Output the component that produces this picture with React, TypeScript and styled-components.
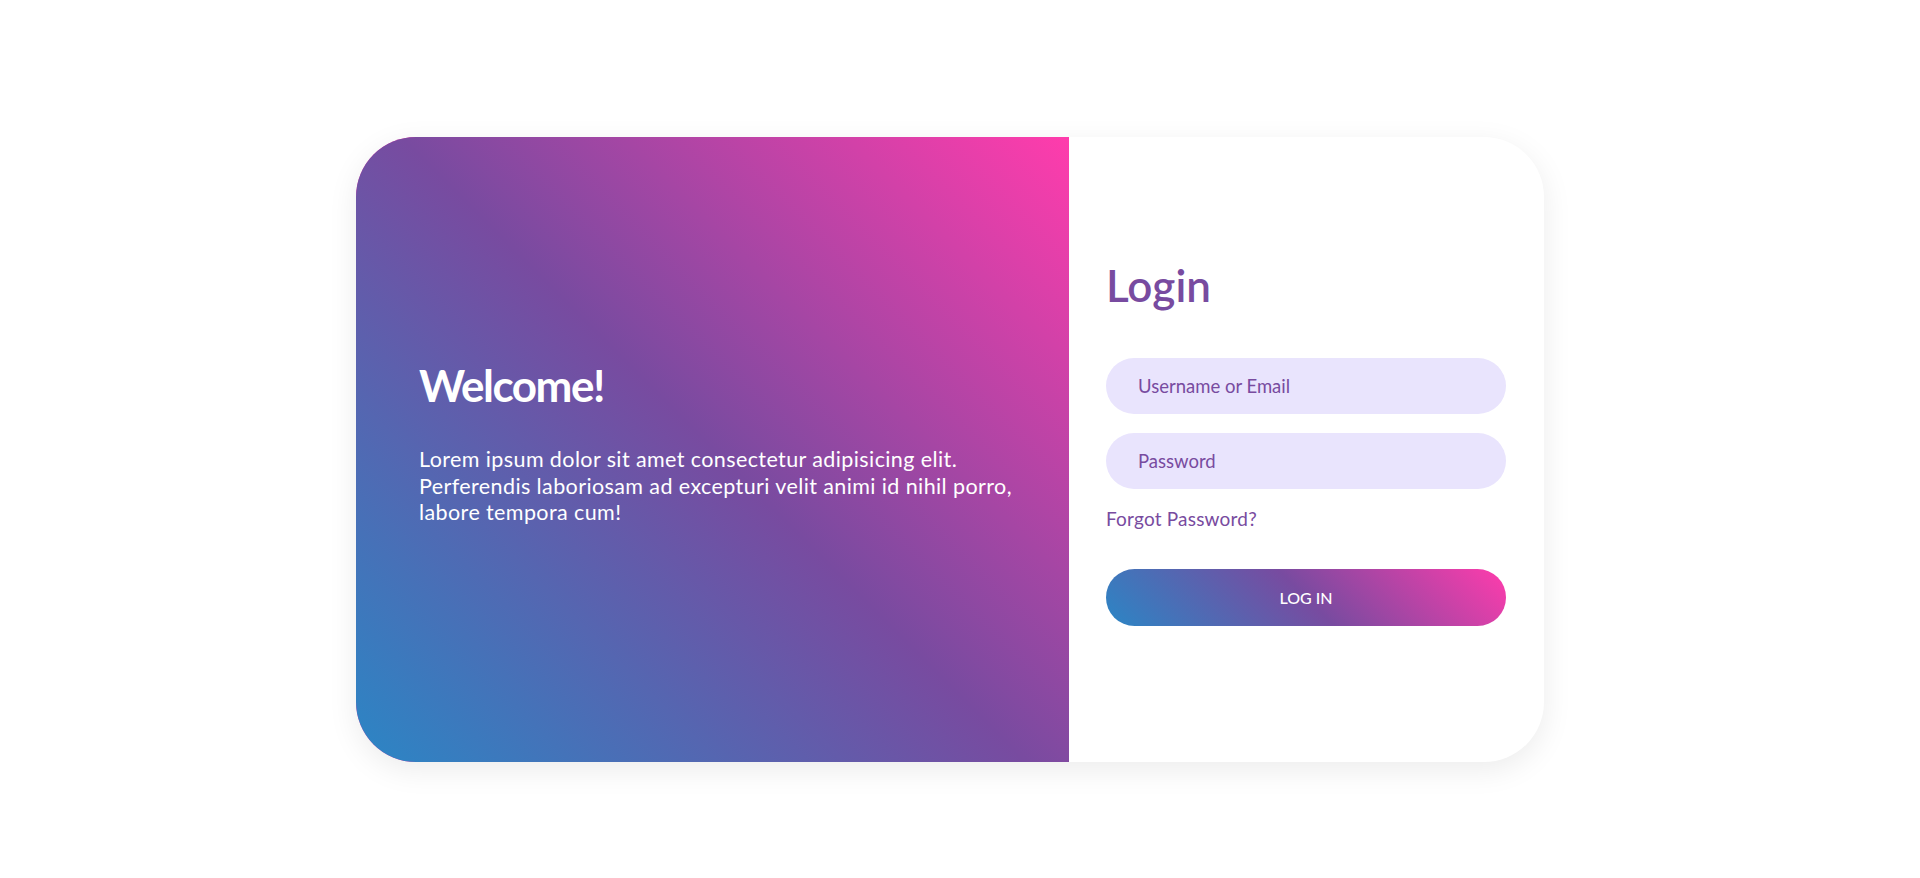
import React from 'react'
import styled, { createGlobalStyle } from 'styled-components'

const FONT = `"Lato", "Roboto", sans-serif`
const GRADIENT = 'linear-gradient(225deg, #ff3cac 0%, #784ba0 50%, #2b86c5 100%)'
const PURPLE = '#784ba0'

const GlobalStyle = createGlobalStyle`
  html, body {
    margin: 0;
    padding: 0;
    background: #fff;
    font-family: ${FONT};
  }
  * {
    box-sizing: border-box;
  }
`

const SPage = styled.div`
  display: flex;
  align-items: center;
  justify-content: center;
  min-height: 100vh;
  padding: 21px 20px 0 0;
`

const SCard = styled.div`
  display: flex;
  width: 1188px;
  height: 625px;
  border-radius: 60px;
  overflow: hidden;
  background: #fff;
  box-shadow: 0 8px 30px rgba(0, 0, 0, 0.08);
`

const SWelcome = styled.section`
  flex: 0 0 713px;
  display: flex;
  flex-direction: column;
  justify-content: center;
  padding: 0 50px 14px 63px;
  background-color: #ff3cac;
  background-image: ${GRADIENT};
  color: #fff;
`

const STitle = styled.h1`
  margin: 0 0 34px;
  font-size: 44px;
  font-weight: 700;
  letter-spacing: -1.5px;
  line-height: 1.2;
`

const SText = styled.p`
  margin: 0;
  font-size: 21.5px;
  letter-spacing: 0.4px;
  line-height: 26.5px;
`

const SForm = styled.form`
  flex: 1;
  display: flex;
  flex-direction: column;
  justify-content: center;
  padding: 0 38px 14px 37px;
`

const SHeading = styled.h2`
  margin: 0 0 46px;
  font-size: 44px;
  font-weight: 600;
  line-height: 1.2;
  color: ${PURPLE};
`

const SInput = styled.input`
  width: 100%;
  height: 56px;
  margin-bottom: 19px;
  padding: 0 32px;
  border: none;
  border-radius: 28px;
  background: #e9e4fd;
  font-family: ${FONT};
  font-size: 18.5px;
  color: ${PURPLE};
  outline: none;

  &::placeholder {
    color: ${PURPLE};
  }
`

const SLink = styled.a`
  align-self: flex-start;
  font-size: 19px;
  letter-spacing: 0.2px;
  line-height: 1.2;
  color: ${PURPLE};
  text-decoration: none;
  cursor: pointer;
`

const SButton = styled.button`
  width: 100%;
  height: 57px;
  margin-top: 38px;
  border: none;
  border-radius: 29px;
  background-image: ${GRADIENT};
  font-family: ${FONT};
  font-size: 16px;
  font-weight: 500;
  color: #fff;
  text-transform: uppercase;
  cursor: pointer;
`

const App: React.FC = () => {
  return (
    <>
      <GlobalStyle />
      <SPage>
        <SCard>
          <SWelcome>
            <STitle>Welcome!</STitle>
            <SText>
              Lorem ipsum dolor sit amet consectetur adipisicing elit. Perferendis
              laboriosam ad excepturi velit animi id nihil porro, labore tempora cum!
            </SText>
          </SWelcome>
          <SForm onSubmit={e => e.preventDefault()}>
            <SHeading>Login</SHeading>
            <SInput type="text" placeholder="Username or Email" />
            <SInput type="password" placeholder="Password" />
            <SLink>Forgot Password?</SLink>
            <SButton type="submit">Log in</SButton>
          </SForm>
        </SCard>
      </SPage>
    </>
  )
}

export default App
